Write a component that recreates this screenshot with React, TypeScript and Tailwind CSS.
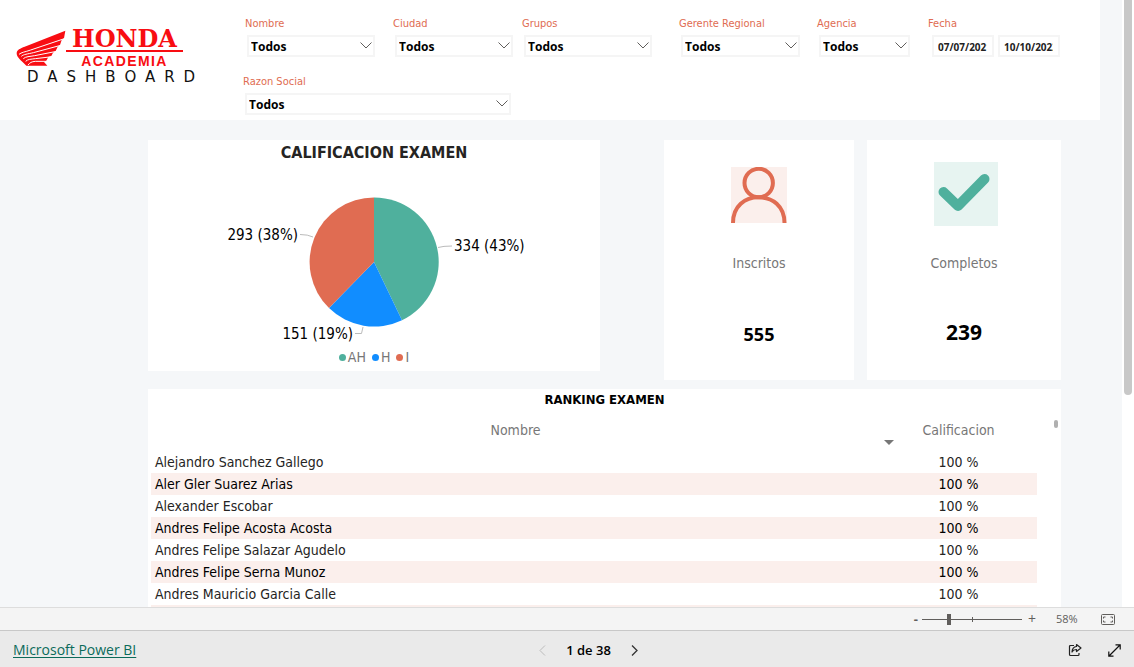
import { useState } from 'react';
import clsx from 'clsx';

const tahoma = "font-['DejaVu_Sans_Condensed','DejaVu_Sans',sans-serif]";
const segoe = "font-['Open_Sans','Noto_Sans',sans-serif]";

const ranking = [
  'Alejandro Sanchez Gallego',
  'Aler Gler Suarez Arias',
  'Alexander Escobar',
  'Andres Felipe Acosta Acosta',
  'Andres Felipe Salazar Agudelo',
  'Andres Felipe Serna Munoz',
  'Andres Mauricio Garcia Calle',
];

const legend = [
  { label: 'AH', color: 'bg-[#4fb09d]' },
  { label: 'H', color: 'bg-[#118dff]' },
  { label: 'I', color: 'bg-[#e06c52]' },
];

function Logo() {
  return (
    <div className="w-[243px] shrink-0 pl-4 pt-7">
      <div className="flex">
        <svg viewBox="0 0 150 108" className="mt-[2px] h-9 w-[50px] shrink-0" aria-hidden="true">
          <path
            fill="#f80d12"
            d="M148 2 L144 25 L137 30 L132 45 L125 50 L119 63 L111 68 L106 78 L97 81 L91 92 L84 96 L94 107 L31 107 C15 92 2 82 2 70 C2 59 13 55 26 50 Z"
          />
          <g fill="none" stroke="#fff" strokeWidth="3">
            <path d="M145 26 L44 60 C27 66 16 67 9 73" />
            <path d="M134 46 L52 68 C35 72 22 73 16 79" />
            <path d="M122 64 L56 77 C40 80 30 79 22 86" />
            <path d="M109 80 L58 86 C44 88 36 87 29 94" />
            <path d="M94 94 L58 94 C46 95 42 98 36 105" />
          </g>
        </svg>
        <div className="w-[117px] text-center text-[#f80d12]">
          <div className="border-b-2 border-[#f80d12] font-['DejaVu_Serif',serif] text-[24px] font-bold leading-[22px]">
            HONDA
          </div>
          <div className="pt-[1px] font-['Liberation_Sans',sans-serif] text-[14px] font-bold leading-4 tracking-widest">
            ACADEMIA
          </div>
        </div>
      </div>
      <div className="pl-[11px] font-['DejaVu_Sans',sans-serif] text-[15px] leading-4 tracking-[9px] text-[#111]">
        DASHBOARD
      </div>
    </div>
  );
}

function Slicer({ id, label, className }: { id: string; label: string; className: string }) {
  return (
    <div className={className}>
      <label htmlFor={id} className={clsx(tahoma, 'block text-[11px] leading-4 text-[#e06c52]')}>
        {label}
      </label>
      <div className="relative ml-[2px] mt-[3px]">
        <select
          id={id}
          className={clsx(
            segoe,
            'block h-[22px] w-full appearance-none rounded-none border-2 border-[#f5f5f5] bg-white pl-[2px] pt-[2px] text-[12px] font-bold leading-4 text-black'
          )}
        >
          <option>Todos</option>
        </select>
        <svg
          viewBox="0 0 12 7"
          className="pointer-events-none absolute right-[3px] top-[7px] h-[7px] w-3"
          fill="none"
          stroke="#605e5c"
          aria-hidden="true"
        >
          <path d="M0.5 0.5 L6 6 L11.5 0.5" />
        </svg>
      </div>
    </div>
  );
}

function DateInput({ label, value }: { label: string; value: string }) {
  return (
    <input
      type="text"
      aria-label={label}
      defaultValue={value}
      className={clsx(
        segoe,
        'h-[22px] w-[62px] border-2 border-[#f5f5f5] bg-white pl-1 pr-[5px] pt-[2px] text-[10px] font-bold text-[#222]'
      )}
    />
  );
}

function Filters() {
  return (
    <div className="pt-4">
      <div className="flex pl-[2px]">
        <Slicer id="nombre" label="Nombre" className="w-[130px]" />
        <Slicer id="ciudad" label="Ciudad" className="ml-[18px] w-[120px]" />
        <Slicer id="grupos" label="Grupos" className="ml-[9px] w-[130px]" />
        <Slicer id="gerente" label="Gerente Regional" className="ml-[27px] w-[121px]" />
        <Slicer id="agencia" label="Agencia" className="ml-[17px] w-[93px]" />
        <fieldset className="ml-[18px]">
          <legend className={clsx(tahoma, 'text-[11px] leading-4 text-[#e06c52]')}>Fecha</legend>
          <div className="ml-1 mt-[3px] flex gap-1">
            <DateInput label="Fecha inicial" value="07/07/2021" />
            <DateInput label="Fecha final" value="10/10/2022" />
          </div>
        </fieldset>
      </div>
      <Slicer id="razon" label="Razon Social" className="mt-[17px] w-[268px]" />
    </div>
  );
}

function PieCard() {
  return (
    <section className="h-[231px] flex-1 bg-white">
      <h2 className={clsx(tahoma, 'pt-1 text-center text-[16px] font-bold leading-[18px] text-[#252423]')}>
        CALIFICACION EXAMEN
      </h2>
      <svg viewBox="0 0 320 166" className="mx-auto mt-[18px] block h-[166px] w-[320px]">
        <path d="M160 82 L160 17.500 A64.500 64.500 0 0 1 188 140.2 Z" fill="#4fb09d" />
        <path d="M160 82 L188 140.2 A64.500 64.500 0 0 1 115 128.100 Z" fill="#118dff" />
        <path d="M160 82 L115 128.100 A64.500 64.500 0 0 1 160 17.500 Z" fill="#e06c52" />
        <g fill="none" stroke="#bbb">
          <path d="M224 67.5 Q229 66 238 66" />
          <path d="M99 57 Q94 54.500 86 54.500" />
          <path d="M149 147 L147.500 153.500 L141 153.500" />
        </g>
        <g className={clsx(tahoma, 'text-[15px]')} fill="#000">
          <text x="240" y="71">334 (43%)</text>
          <text x="84" y="60" textAnchor="end">293 (38%)</text>
          <text x="139" y="159" textAnchor="end">151 (19%)</text>
        </g>
      </svg>
      <ul className={clsx(tahoma, 'flex justify-center gap-[6px] text-[14px] leading-[22px] text-[#777]')}>
        {legend.map((item) => (
          <li key={item.label} className="flex items-center gap-[2px]">
            <span className={clsx('size-[7px] rounded-full', item.color)} />
            {item.label}
          </li>
        ))}
      </ul>
    </section>
  );
}

function InscritosCard() {
  return (
    <section className="ml-16 h-60 w-[190px] bg-white pt-[27px] text-center">
      <svg viewBox="0 0 56 56" className="mx-auto block size-14 bg-[#fbefec]" aria-hidden="true">
        <g fill="none" stroke="#e06c52" strokeWidth="4">
          <circle cx="27.700" cy="16" r="14.200" />
          <path d="M2 56 C2 39 14 30.300 27.700 30.300 S53.500 39 53.500 56" />
        </g>
      </svg>
      <h2 className={clsx(tahoma, 'mt-[30px] text-[14px] leading-5 text-[#777]')}>Inscritos</h2>
      <p className={clsx(segoe, 'mt-[49px] text-[18px] font-bold leading-6 text-black')}>555</p>
    </section>
  );
}

function CompletosCard() {
  return (
    <section className="ml-[13px] h-60 w-[194px] bg-white pt-[22px] text-center">
      <svg viewBox="0 0 64 64" className="ml-[67px] block size-16 bg-[#e7f4f1]" aria-hidden="true">
        <path
          d="M9.500 30 L24 44 L50.500 17"
          fill="none"
          stroke="#4fb09d"
          strokeWidth="10"
          strokeLinecap="round"
          strokeLinejoin="round"
        />
      </svg>
      <h2 className={clsx(tahoma, 'mt-[27px] text-[14px] leading-5 text-[#777]')}>Completos</h2>
      <p className={clsx(segoe, 'mt-[47px] text-[21px] font-bold leading-6 text-black')}>239</p>
    </section>
  );
}

function RankingCard() {
  return (
    <section className="relative mt-[9px] bg-white">
      <h2 className={clsx(tahoma, 'pt-[2px] text-center text-[13px] font-bold leading-[18px] text-black')}>
        RANKING EXAMEN
      </h2>
      <div className="pl-[3px] pr-6">
        <table className={clsx(tahoma, 'w-full border-collapse text-[14px] leading-[22px]')}>
          <thead>
            <tr className="h-[42px] text-[#777]">
              <th className="font-normal">Nombre</th>
              <th className="relative w-[157px] font-normal" aria-sort="descending">
                Calificacion
                <svg
                  viewBox="0 0 10 5"
                  className="absolute bottom-[6px] left-1 h-[5px] w-[10px]"
                  aria-hidden="true"
                >
                  <path d="M0 0 H10 L5 5 Z" fill="#777" />
                </svg>
              </th>
            </tr>
          </thead>
          <tbody>
            {ranking.map((name) => (
              <tr key={name} className="h-[22px] text-[#252423] even:bg-[#fbefec] even:text-black">
                <td className="pl-1">{name}</td>
                <td className="text-center">100 %</td>
              </tr>
            ))}
            <tr className="h-[22px] bg-[#fbefec]" aria-hidden="true">
              <td colSpan={2} />
            </tr>
          </tbody>
        </table>
      </div>
      <span className="absolute right-[3px] top-[31px] h-2 w-1 rounded-xs bg-[#b0b0b0]" />
    </section>
  );
}

function ZoomBar() {
  const [zoom, setZoom] = useState(58);

  return (
    <div
      className={clsx(
        segoe,
        'flex h-[23px] shrink-0 items-center justify-end border-t border-[#ddd] bg-[#f4f4f4] pr-[19px] text-[#605e5c]'
      )}
    >
      <button type="button" aria-label="Alejar" className="mr-1 text-[13px] font-bold leading-4">
        -
      </button>
      <div className="relative flex h-4 w-[100px] items-center">
        <span className="absolute left-1/2 h-[5px] w-px bg-[#605e5c]" />
        <input
          type="range"
          aria-label="Zoom"
          min={10}
          max={194}
          value={zoom}
          onChange={(e) => setZoom(Number(e.target.value))}
          className="h-px w-full appearance-none bg-[#605e5c] [&::-webkit-slider-thumb]:h-[11px] [&::-webkit-slider-thumb]:w-1 [&::-webkit-slider-thumb]:appearance-none [&::-webkit-slider-thumb]:bg-[#605e5c]"
        />
      </div>
      <button type="button" aria-label="Acercar" className="ml-[6px] text-[14px] leading-4">
        +
      </button>
      <span className="ml-5 w-[26px] text-[11px] leading-4">{zoom}%</span>
      <button type="button" aria-label="Ajustar a la página" className="ml-[19px]">
        <svg viewBox="0 0 14 11" className="block h-[11px] w-[14px]" fill="none" stroke="#605e5c">
          <rect x="0.5" y="0.5" width="13" height="10" rx="1" />
          <path d="M2.500 4.500 V3 H4.500 M9.500 3 H11.500 V4.500 M11.500 6.500 V8 H9.500 M4.500 8 H2.500 V6.500" />
        </svg>
      </button>
    </div>
  );
}

function StatusBar() {
  return (
    <footer
      className={clsx(
        segoe,
        'grid h-[37px] shrink-0 grid-cols-3 items-center border-t border-[#c8c8c8] bg-[#eaeaea] px-[13px] pt-[2px]'
      )}
    >
      <a href="https://powerbi.microsoft.com" className="text-[14px] leading-5 text-[#0b6a5a] underline underline-offset-2">
        Microsoft Power BI
      </a>
      <nav className="flex items-center justify-center gap-5 pl-[43px]">
        <button type="button" aria-label="Página anterior" disabled>
          <svg viewBox="0 0 7 11" className="block h-[11px] w-[7px]" fill="none" stroke="#bbb">
            <path d="M6 0.500 L1 5.500 L6 10.500" />
          </svg>
        </button>
        <span className="text-[13px] font-semibold leading-5 text-black">1 de 38</span>
        <button type="button" aria-label="Página siguiente">
          <svg viewBox="0 0 7 11" className="block h-[11px] w-[7px]" fill="none" stroke="#333" strokeWidth="1.300">
            <path d="M1 0.500 L6 5.500 L1 10.500" />
          </svg>
        </button>
      </nav>
      <div className="flex items-center justify-end gap-[26px]">
        <button type="button" aria-label="Compartir">
          <svg viewBox="0 0 14 14" className="block size-[14px]" fill="none" stroke="#222" strokeWidth="1.200">
            <path d="M6 2.500 H2.500 Q1.500 2.500 1.500 3.500 V11.500 Q1.500 12.500 2.500 12.500 H10 Q11 12.500 11 11.500 V10" />
            <path d="M8.500 1.500 L13 5 L8.500 8.500 V6.500 Q5.500 6.300 4 9 Q4.300 4 8.500 3.500 Z" strokeLinejoin="round" />
          </svg>
        </button>
        <button type="button" aria-label="Pantalla completa">
          <svg viewBox="0 0 13 13" className="block size-[13px]" fill="none" stroke="#111" strokeWidth="1.200">
            <path d="M1 12 L12 1 M7.500 0.800 H12.200 V5.500 M0.800 7.500 V12.200 H5.500" />
          </svg>
        </button>
      </div>
    </footer>
  );
}

export default function App() {
  return (
    <div className="flex h-screen flex-col overflow-hidden bg-white">
      <div className="flex min-h-0 flex-1">
        <main className="min-w-0 flex-1 overflow-hidden bg-[#f5f7f9]">
          <header className="mr-[22px] flex h-[120px] bg-white">
            <Logo />
            <Filters />
          </header>
          <div className="pl-[148px] pr-[61px] pt-5">
            <div className="flex items-start">
              <PieCard />
              <InscritosCard />
              <CompletosCard />
            </div>
            <RankingCard />
          </div>
        </main>
        <div className="flex w-3 shrink-0 justify-center bg-white">
          <div className="h-[65%] w-2 rounded-b-full bg-[#c8c8c8]" />
        </div>
      </div>
      <ZoomBar />
      <StatusBar />
    </div>
  );
}
